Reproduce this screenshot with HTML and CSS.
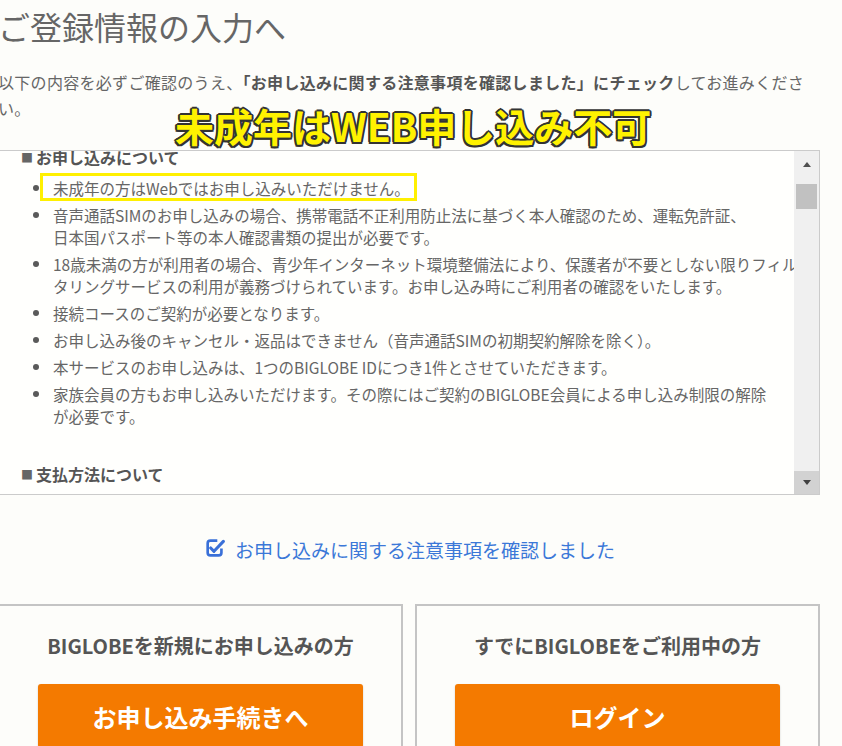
FILE: index.html
```html
<!DOCTYPE html>
<html lang="ja">
<head>
    <meta charset="UTF-8">
    <meta name="viewport" content="width=device-width, initial-scale=1.0">
    <title>ご登録情報の入力へ</title>
    <link rel="stylesheet" href="styles.css">
</head>
<body>

    <div class="page">
        <h1 class="title">ご登録情報の入力へ</h1>
        <p class="intro">以下の内容を必ずご確認のうえ、<strong>「お申し込みに関する注意事項を確認しました」にチェック</strong>してお進みください。</p>

        <div class="notice-label">未成年はWEB申し込み不可</div>

        <div class="terms">
            <div class="terms-body">
                <h3 class="terms-head first"><span class="sq">■</span>お申し込みについて</h3>
                <ul class="terms-list">
                    <li><span class="marked">未成年の方はWebではお申し込みいただけません。</span></li>
                    <li>音声通話SIMのお申し込みの場合、携帯電話不正利用防止法に基づく本人確認のため、運転免許証、<br>日本国パスポート等の本人確認書類の提出が必要です。</li>
                    <li>18歳未満の方が利用者の場合、青少年インターネット環境整備法により、保護者が不要としない限りフィル<br>タリングサービスの利用が義務づけられています。お申し込み時にご利用者の確認をいたします。</li>
                    <li>接続コースのご契約が必要となります。</li>
                    <li>お申し込み後のキャンセル・返品はできません（音声通話SIMの初期契約解除を除く）。</li>
                    <li>本サービスのお申し込みは、1つのBIGLOBE IDにつき1件とさせていただきます。</li>
                    <li>家族会員の方もお申し込みいただけます。その際にはご契約のBIGLOBE会員による申し込み制限の解除<br>が必要です。</li>
                </ul>
                <h3 class="terms-head"><span class="sq">■</span>支払方法について</h3>
            </div>
            <div class="scrollbar">
                <div class="sb-btn sb-up"><span class="arrow-up"></span></div>
                <div class="sb-track"><div class="sb-thumb"></div></div>
                <div class="sb-btn sb-down"><span class="arrow-down"></span></div>
            </div>
        </div>

        <label class="agree">
            <svg class="check-icon" width="22" height="22" viewBox="0 0 20 20">
                <path d="M16.75 10.5V14.25a2.5 2.5 0 0 1-2.5 2.5H6.75a2.5 2.5 0 0 1-2.5-2.5V5.75a2.5 2.5 0 0 1 2.5-2.5H13" fill="none" stroke="#3a70d8" stroke-width="2.4"/>
                <path d="M7 10l3 3 8.5-9" fill="none" stroke="#3a70d8" stroke-width="2.8" stroke-linecap="round" stroke-linejoin="round"/>
            </svg>
            <span>お申し込みに関する注意事項を確認しました</span>
        </label>

        <div class="cards">
            <div class="card">
                <h2 class="card-title">BIGLOBEを新規にお申し込みの方</h2>
                <button class="btn">お申し込み手続きへ</button>
            </div>
            <div class="card">
                <h2 class="card-title">すでにBIGLOBEをご利用中の方</h2>
                <button class="btn">ログイン</button>
            </div>
        </div>
    </div>

</body>
</html>
```

FILE: styles.css
```css
body {
    margin: 0;
    background-color: #fdfdfa;
    font-family: "Noto Sans CJK JP", "Noto Sans", sans-serif;
    color: #666;
    overflow: hidden;
}
.page {
    position: relative;
    width: 822px;
    margin-left: -2px;
}
.title {
    margin: 0;
    padding-top: 6px;
    font-size: 32px;
    font-weight: 400;
    line-height: 40px;
    color: #666;
}
.intro {
    margin: 23px 0 0;
    width: 822px;
    font-size: 16px;
    line-height: 26px;
    letter-spacing: 0.3px;
}
.intro strong {
    color: #555;
}

/* annotation over the page */
.notice-label {
    position: absolute;
    left: 177px;
    top: 102px;
    font-size: 39px;
    font-weight: 700;
    line-height: 46px;
    color: #fff200;
    text-shadow:
        2px 0 0 #333, -2px 0 0 #333, 0 2px 0 #333, 0 -2px 0 #333,
        1.5px 1.5px 0 #333, -1.5px 1.5px 0 #333, 1.5px -1.5px 0 #333, -1.5px -1.5px 0 #333;
}

.terms {
    display: flex;
    height: 343px;
    margin-top: 29px;
    border: 1px solid #cbcbcb;
    background-color: #fffffd;
}
.terms-body {
    flex: 1;
    overflow: hidden;
    padding-left: 22px;
}
.terms-head {
    margin: 36px 0 0;
    font-size: 16px;
    font-weight: 700;
    line-height: 22px;
    color: #555;
}
.terms-head.first {
    margin-top: -5px;
}
.sq {
    display: inline-block;
    font-size: 12px;
    margin-right: 3px;
    color: #666;
    vertical-align: 1px;
}
.terms-list {
    list-style: none;
    margin: 8px 0 0;
    padding-left: 32px;
    font-size: 15.5px;
    line-height: 22px;
    white-space: nowrap;
}
.terms-list li {
    position: relative;
    margin-bottom: 5px;
}
.terms-list li::before {
    content: "";
    position: absolute;
    left: -20px;
    top: 8px;
    width: 6px;
    height: 6px;
    border-radius: 50%;
    background-color: #5a5a5a;
}
.marked {
    position: relative;
}
.marked::after {
    content: "";
    position: absolute;
    left: -13px;
    right: -7px;
    top: -4px;
    bottom: -2px;
    border: 3px solid #fff000;
}

.scrollbar {
    width: 25px;
    display: flex;
    flex-direction: column;
    background-color: #f0f0f0;
}
.sb-btn {
    display: flex;
    align-items: center;
    justify-content: center;
}
.sb-up {
    height: 26px;
}
.sb-down {
    height: 23px;
    background-color: #d2d2d2;
}
.arrow-up {
    border-left: 4px solid transparent;
    border-right: 4px solid transparent;
    border-bottom: 5px solid #505050;
}
.arrow-down {
    border-left: 4px solid transparent;
    border-right: 4px solid transparent;
    border-top: 5px solid #404040;
}
.sb-track {
    flex: 1;
    padding-top: 7px;
}
.sb-thumb {
    height: 25px;
    margin: 0 2px;
    background-color: #c1c1c1;
}

.agree {
    display: flex;
    align-items: center;
    justify-content: center;
    gap: 10px;
    margin-top: 39px;
    height: 30px;
    font-size: 19px;
    color: #3b78d8;
    cursor: pointer;
}
.check-icon {
    flex-shrink: 0;
    margin-top: -2px;
}

.cards {
    display: grid;
    grid-template-columns: 1fr 1fr;
    gap: 12px;
    margin-top: 40px;
}
.card {
    border: 2px solid #c4c4c4;
    padding: 26px 38px 30px;
    text-align: center;
}
.card-title {
    margin: 0 0 24px;
    font-size: 20px;
    font-weight: 700;
    line-height: 28px;
    color: #555;
}
.btn {
    display: block;
    width: 100%;
    height: 64px;
    border: none;
    border-radius: 3px;
    background-color: #f47a00;
    box-shadow: 0 1px 2px rgba(0, 0, 0, 0.2);
    color: #fff;
    font-family: inherit;
    font-size: 24px;
    font-weight: 700;
    cursor: pointer;
}
```
